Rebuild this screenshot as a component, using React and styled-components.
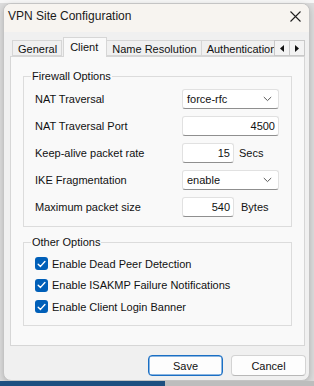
import React from "react";
import styled, { createGlobalStyle } from "styled-components";

const Global = createGlobalStyle`
  html, body { margin: 0; padding: 0; }
  body {
    background: #e3e3e3;
    font-family: "Liberation Sans", Arial, sans-serif;
    font-size: 11px;
    color: #111;
    width: 314px;
    height: 386px;
    overflow: hidden;
  }
  * { box-sizing: border-box; }
`;

const Screen = styled.div`
  width: 314px;
  height: 386px;
  display: flex;
  flex-direction: column;
  background: linear-gradient(#f6f6f6 0 3px, #dcdcdc 3px);
`;

const Window = styled.div`
  margin: 3px 4px 0 3px;
  width: 307px;
  height: 378px;
  border: 1px solid #c4c4c4;
  border-radius: 8px;
  background: #f0f0f0;
  overflow: hidden;
  display: flex;
  flex-direction: column;
  box-shadow: 0 2px 6px rgba(0, 0, 0, 0.18);
`;

const TitleBar = styled.div`
  height: 28px;
  flex: none;
  display: flex;
  align-items: flex-start;
  justify-content: space-between;
  padding: 5px 8px 0 4px;
  background: #f7f4f0;
`;

const Title = styled.div`
  font-size: 12px;
  line-height: 14px;
  color: #1a1a1a;
`;

const CloseIcon = styled.svg`
  width: 11px;
  height: 11px;
  margin-top: 2px;
  display: block;
`;

const Body = styled.div`
  flex: 1;
  display: flex;
  flex-direction: column;
  padding: 5px 4px 6px 6px;
`;

const TabStrip = styled.div`
  height: 20px;
  display: flex;
  align-items: flex-end;
  position: relative;
  z-index: 2;
`;

const TabList = styled.div`
  flex: 1;
  height: 20px;
  display: flex;
  align-items: flex-end;
  overflow: hidden;
  padding-left: 2px;
`;

const Tab = styled.div`
  flex: none;
  white-space: nowrap;
  height: ${(p) => (p.$active ? "20px" : "16px")};
  margin-bottom: ${(p) => (p.$active ? "0" : "1px")};
  margin-left: ${(p) => (p.$active ? "1px" : "0")};
  padding: ${(p) => (p.$active ? "3px 8px 0 6px" : "2px 4px 0 5px")};
  line-height: 13px;
  border: 1px solid #d6d6d6;
  border-bottom: ${(p) => (p.$active ? "none" : "1px solid #d6d6d6")};
  border-left: ${(p) => (p.$active || p.$first ? "1px solid #d6d6d6" : "none")};
  background: ${(p) => (p.$active ? "#f9f9f9" : "#f0f0f0")};
  color: #111;
`;

const ScrollButtons = styled.div`
  flex: none;
  display: flex;
  align-self: flex-start;
  margin-top: 3px;
`;

const ScrollButton = styled.div`
  width: 16px;
  height: 16px;
  border: 1px solid #c9c9c9;
  margin-left: ${(p) => (p.$second ? "-1px" : "0")};
  background: #f3f3f3;
  display: flex;
  align-items: center;
  justify-content: center;
`;

const Pane = styled.div`
  height: 290px;
  margin-top: -1px;
  border: 1px solid #d6d6d6;
  background: #f9f9f9;
  padding: 12px 12px 0 12px;
  display: flex;
  flex-direction: column;
  gap: 8px;
`;

const Group = styled.fieldset`
  margin: 0;
  border: 1px solid #dcdcdc;
  padding: ${(p) => p.$pad};
  min-width: 0;
`;

const Legend = styled.legend`
  padding: 0 1px;
  margin-left: -4px;
  line-height: 14px;
  font-size: 11px;
  color: #111;
`;

const Rows = styled.div`
  display: flex;
  flex-direction: column;
  gap: ${(p) => p.$gap};
`;

const Row = styled.div`
  height: 20px;
  display: flex;
  align-items: center;
`;

const Label = styled.div`
  width: 147px;
  flex: none;
  white-space: nowrap;
`;

const Field = styled.div`
  width: ${(p) => p.$w}px;
  height: 20px;
  flex: none;
  background: #ffffff;
  border: 1px solid #e1e1e1;
  border-bottom-color: #8f8f8f;
  border-radius: 3px;
  display: flex;
  align-items: center;
  justify-content: ${(p) => (p.$right ? "flex-end" : "space-between")};
  padding: ${(p) => (p.$right ? "0 3px 0 4px" : "0 6px 0 4px")};
  line-height: 13px;
`;

const Unit = styled.div`
  margin-left: ${(p) => p.$ml}px;
  white-space: nowrap;
`;

const CheckRow = styled.div`
  height: 21.5px;
  display: flex;
  align-items: center;
  gap: 4px;
  white-space: nowrap;
`;

const CheckBox = styled.div`
  width: 13px;
  height: 13px;
  border-radius: 3px;
  background: #005fb8;
  display: flex;
  align-items: center;
  justify-content: center;
  flex: none;
`;

const Footer = styled.div`
  display: flex;
  justify-content: flex-end;
  gap: 8px;
  margin-top: 9px;
  margin-right: -1px;
`;

const Button = styled.div`
  width: 75px;
  height: 21px;
  border-radius: 4px;
  background: #fdfdfd;
  border: 1px solid ${(p) => (p.$primary ? "#1a6fc4" : "#d3d3d3")};
  border-bottom-color: ${(p) => (p.$primary ? "#1a6fc4" : "#b8b8b8")};
  box-shadow: ${(p) => (p.$primary ? "inset 0 0 0 0.5px #1a6fc4" : "none")};
  display: flex;
  align-items: center;
  justify-content: center;
  font-size: 11px;
  color: #111;
`;

const BottomStrip = styled.div`
  flex: 1;
  display: flex;
`;

const StripPart = styled.div`
  width: ${(p) => p.$w};
  flex: ${(p) => (p.$grow ? 1 : "none")};
  background: ${(p) => p.$bg};
`;

const Chevron = () => (
  <svg width="9" height="6" viewBox="0 0 9 6">
    <path d="M0.8 1 L4.5 4.6 L8.2 1" fill="none" stroke="#5a5a5a" strokeWidth="1" />
  </svg>
);

const Check = () => (
  <svg width="9" height="8" viewBox="0 0 9 8">
    <path d="M1.2 4.2 L3.5 6.4 L7.9 1.5" fill="none" stroke="#ffffff" strokeWidth="1.4" strokeLinecap="round" strokeLinejoin="round" />
  </svg>
);

const Arrow = ({ dir }) => (
  <svg width="4" height="7" viewBox="0 0 4 7">
    {dir === "left" ? <path d="M4 0 L0 3.5 L4 7 Z" fill="#111" /> : <path d="M0 0 L4 3.5 L0 7 Z" fill="#111" />}
  </svg>
);

const tabs = ["General", "Client", "Name Resolution", "Authentication"];

export default function App() {
  return (
    <>
      <Global />
      <Screen>
        <Window>
          <TitleBar>
            <Title>VPN Site Configuration</Title>
            <CloseIcon viewBox="0 0 11 11">
              <path d="M0.5 0.5 L10.5 10.5 M10.5 0.5 L0.5 10.5" stroke="#1f1f1f" strokeWidth="1.1" />
            </CloseIcon>
          </TitleBar>
          <Body>
            <TabStrip>
              <TabList>
                {tabs.map((t, i) => (
                  <Tab key={t} $active={i === 1} $first={i === 0}>
                    {t}
                  </Tab>
                ))}
              </TabList>
              <ScrollButtons>
                <ScrollButton>
                  <Arrow dir="left" />
                </ScrollButton>
                <ScrollButton $second>
                  <Arrow dir="right" />
                </ScrollButton>
              </ScrollButtons>
            </TabStrip>
            <Pane>
              <Group $pad="6px 12px 9px 11px">
                <Legend>Firewall Options</Legend>
                <Rows $gap="7px">
                  <Row>
                    <Label>NAT Traversal</Label>
                    <Field $w={97}>
                      <span>force-rfc</span>
                      <Chevron />
                    </Field>
                  </Row>
                  <Row>
                    <Label>NAT Traversal Port</Label>
                    <Field $w={97} $right>4500</Field>
                  </Row>
                  <Row>
                    <Label>Keep-alive packet rate</Label>
                    <Field $w={52} $right>15</Field>
                    <Unit $ml={5}>Secs</Unit>
                  </Row>
                  <Row>
                    <Label>IKE Fragmentation</Label>
                    <Field $w={97}>
                      <span>enable</span>
                      <Chevron />
                    </Field>
                  </Row>
                  <Row>
                    <Label>Maximum packet size</Label>
                    <Field $w={52} $right>540</Field>
                    <Unit $ml={7}>Bytes</Unit>
                  </Row>
                </Rows>
              </Group>
              <Group $pad="4px 12px 7px 11px">
                <Legend>Other Options</Legend>
                <Rows $gap="0px">
                  {["Enable Dead Peer Detection", "Enable ISAKMP Failure Notifications", "Enable Client Login Banner"].map((t) => (
                    <CheckRow key={t}>
                      <CheckBox>
                        <Check />
                      </CheckBox>
                      <span>{t}</span>
                    </CheckRow>
                  ))}
                </Rows>
              </Group>
            </Pane>
            <Footer>
              <Button $primary>Save</Button>
              <Button>Cancel</Button>
            </Footer>
          </Body>
        </Window>
        <BottomStrip>
          <StripPart $w="165px" $bg="#1d4f80" />
          <StripPart $grow $bg="#bdbdbd" />
        </BottomStrip>
      </Screen>
    </>
  );
}
